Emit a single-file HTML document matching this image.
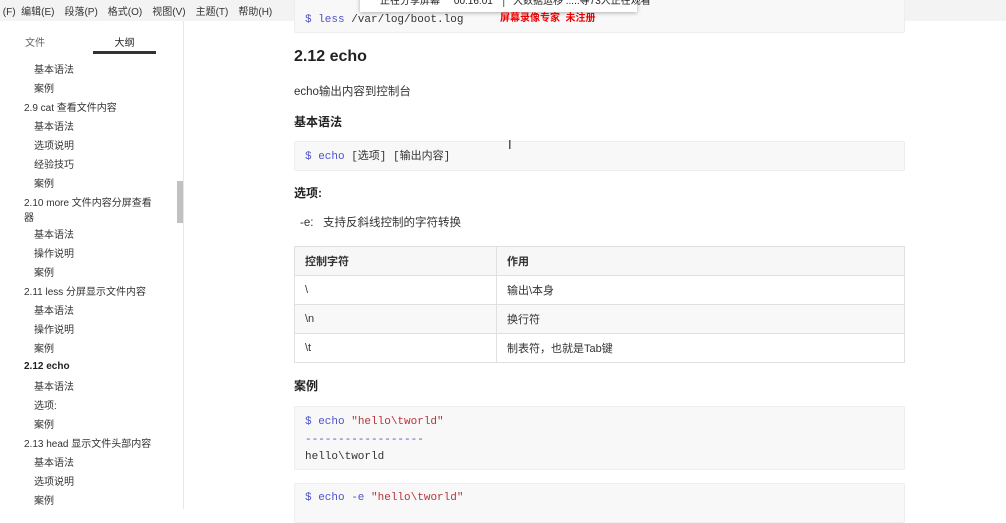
<!DOCTYPE html>
<html><head><meta charset="utf-8"><style>
*{margin:0;padding:0;box-sizing:border-box}
body{width:1006px;height:509px;overflow:hidden;background:#fff;font-family:"Liberation Sans","Noto Sans CJK SC",sans-serif;color:#333;position:relative}
.menu{position:absolute;left:0;top:0;width:1006px;height:21px;background:#f3f3f3;font-size:10px;color:#333;line-height:26px;white-space:nowrap}
.menu span{margin-right:10px}
.pop{position:absolute;left:360px;top:-4px;width:277px;height:16px;background:#fff;box-shadow:0 1px 4px rgba(0,0,0,.3);font-size:10px;line-height:12px;color:#222;white-space:nowrap;padding-left:20px;z-index:5}
.red{position:absolute;left:500px;top:9px;color:#e00;font-size:10px;font-weight:bold;z-index:6}
.side{position:absolute;left:0;top:21px;width:184px;height:488px;border-right:1px solid #e6e6e6;font-size:10px;color:#333}
.tabs{height:34px;position:relative}
.tabs .a{position:absolute;left:25px;top:13px;color:#666}
.tabs .b{position:absolute;left:93px;top:13px;width:63px;text-align:center;color:#222}
.tabs .u{position:absolute;left:75px;top:30px;width:52px;height:3px;background:#333}
.it{position:absolute;white-space:nowrap}
.sb{position:absolute;left:177px;top:181px;width:6px;height:42px;background:#c1c1c1}
.main{position:absolute;left:294px}
pre{font-family:"Liberation Mono","Noto Sans CJK SC",monospace;font-size:11px;background:#f8f8f8;border:1px solid #eee;border-radius:2px;position:absolute;left:294px;width:611px;padding-left:10px;color:#333}
.k{color:#4f53c9}.s{color:#b9333a}
table{position:absolute;left:294px;top:246px;width:611px;border-collapse:collapse;font-size:11px}
td,th{border:1px solid #e0e0e0;height:29px;padding-left:10px;text-align:left}
th{background:#f7f7f7;font-weight:bold;height:29px}
tr:nth-child(odd) td{background:#f8f8f8}
</style></head><body>
<div class="menu">&nbsp;(F)&nbsp;&nbsp;<span>编辑(E)</span><span>段落(P)</span><span>格式(O)</span><span>视图(V)</span><span>主题(T)</span><span>帮助(H)</span></div>
<div class="pop">正在分享屏幕 &nbsp;&nbsp;&nbsp; 00:16:01 &nbsp;&nbsp;│&nbsp; 大数据运移 .....等73人正在观看</div>
<div class="red">屏幕录像专家&nbsp; 未注册</div>
<pre style="top:-6px;height:39px;padding-top:19px"><span class="k">$ less</span> /var/log/boot.log</pre>
<div class="side">
<div class="tabs"><span class="a">文件</span><span class="b">大纲</span><span class="u" style="left:93px;width:63px"></span></div>
</div>
<div class="sb"></div>
<div style="font-size:10px;color:#333">
<div class="it" style="left:34px;top:61px">基本语法</div>
<div class="it" style="left:34px;top:80px">案例</div>
<div class="it" style="left:24px;top:99px">2.9 cat 查看文件内容</div>
<div class="it" style="left:34px;top:118px">基本语法</div>
<div class="it" style="left:34px;top:137px">选项说明</div>
<div class="it" style="left:34px;top:156px">经验技巧</div>
<div class="it" style="left:34px;top:175px">案例</div>
<div class="it" style="left:24px;top:194px">2.10 more 文件内容分屏查看<br>器</div>
<div class="it" style="left:34px;top:226px">基本语法</div>
<div class="it" style="left:34px;top:245px">操作说明</div>
<div class="it" style="left:34px;top:264px">案例</div>
<div class="it" style="left:24px;top:283px">2.11 less 分屏显示文件内容</div>
<div class="it" style="left:34px;top:302px">基本语法</div>
<div class="it" style="left:34px;top:321px">操作说明</div>
<div class="it" style="left:34px;top:340px">案例</div>
<div class="it" style="left:24px;top:361px;font-weight:bold;color:#222">2.12 echo</div>
<div class="it" style="left:34px;top:378px">基本语法</div>
<div class="it" style="left:34px;top:397px">选项:</div>
<div class="it" style="left:34px;top:416px">案例</div>
<div class="it" style="left:24px;top:435px">2.13 head 显示文件头部内容</div>
<div class="it" style="left:34px;top:454px">基本语法</div>
<div class="it" style="left:34px;top:473px">选项说明</div>
<div class="it" style="left:34px;top:492px">案例</div>
</div>
<div class="main" style="top:48px;font-size:16px;font-weight:bold;color:#222">2.12 echo</div>
<div class="main" style="top:83px;font-size:11.5px">echo输出内容到控制台</div>
<div class="main" style="top:113px;font-size:12px;font-weight:bold;color:#222">基本语法</div>
<pre style="top:141px;height:30px;line-height:30px"><span class="k">$ echo</span> [选项] [输出内容]</pre>
<div style="position:absolute;left:508px;top:137px;font-size:13px;color:#333">I</div>
<div class="main" style="top:184px;font-size:12px;font-weight:bold;color:#222">选项:</div>
<div class="main" style="top:214px;left:300px;font-size:11.5px">-e:&nbsp;&nbsp;&nbsp;支持反斜线控制的字符转换</div>
<table>
<tr><th>控制字符</th><th style="width:408px">作用</th></tr>
<tr><td>\</td><td>输出\本身</td></tr>
<tr><td>\n</td><td>换行符</td></tr>
<tr><td>\t</td><td>制表符，也就是Tab键</td></tr>
</table>
<div class="main" style="top:377px;font-size:12px;font-weight:bold;color:#222">案例</div>
<pre style="top:406px;height:64px;padding-top:7px;line-height:17.5px"><span class="k">$ echo</span> <span class="s">"hello\tworld"</span>
<span class="k">------------------</span>
hello\tworld</pre>
<pre style="top:483px;height:40px;padding-top:6px;line-height:17px"><span class="k">$ echo -e</span> <span class="s">"hello\tworld"</span></pre>
</body></html>
